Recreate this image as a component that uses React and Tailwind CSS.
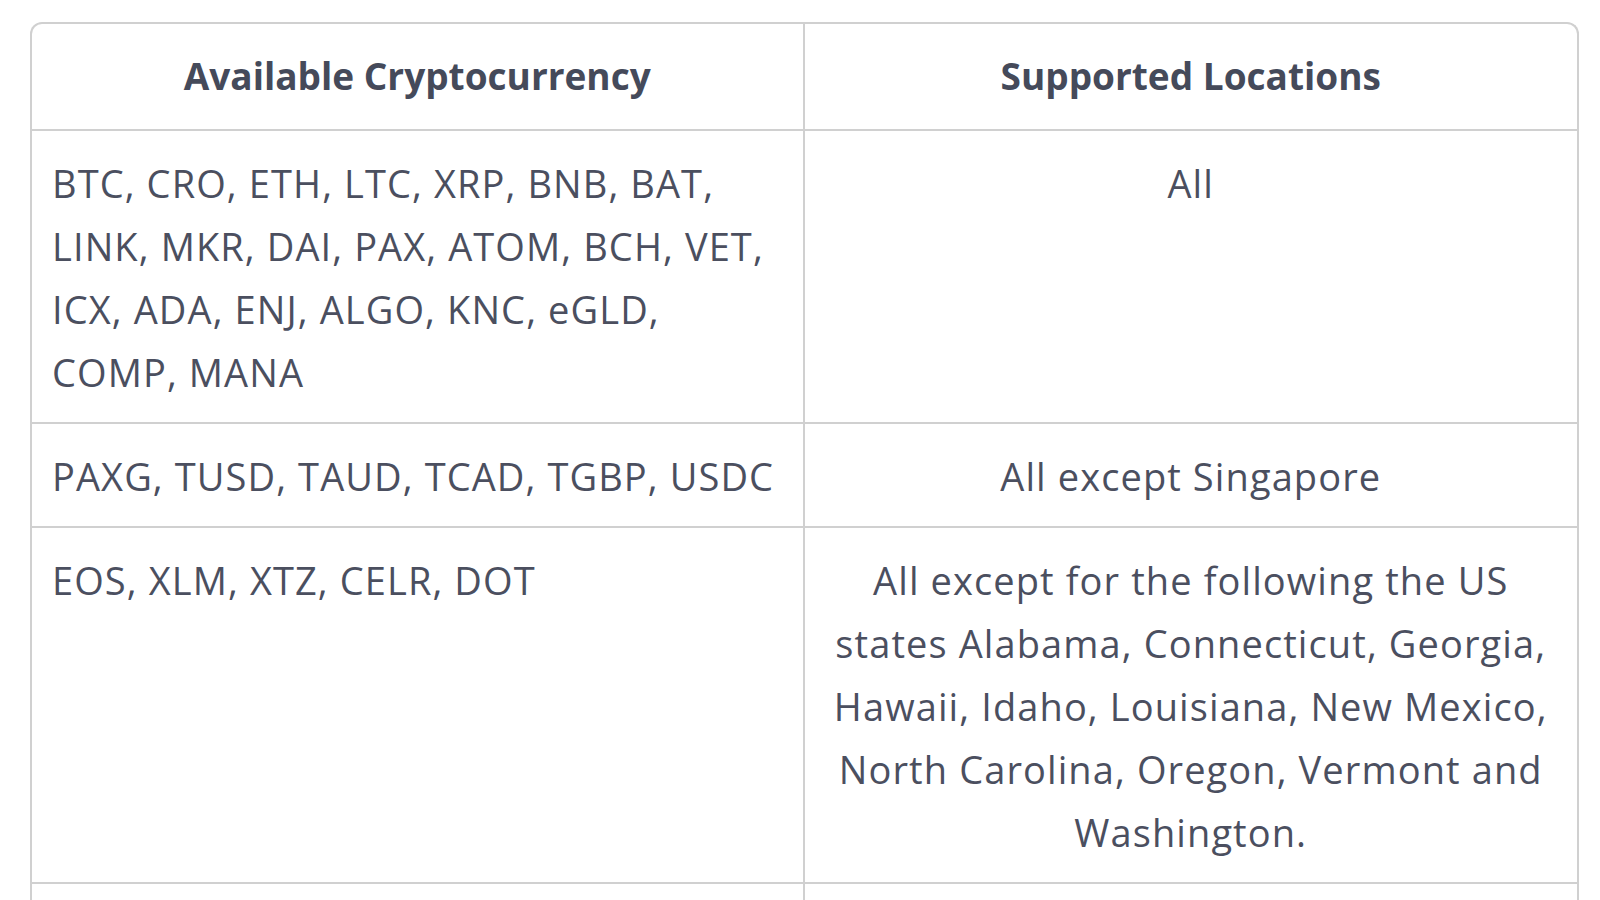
const rows = [
  {
    coins: "BTC, CRO, ETH, LTC, XRP, BNB, BAT, LINK, MKR, DAI, PAX, ATOM, BCH, VET, ICX, ADA, ENJ, ALGO, KNC, eGLD, COMP, MANA",
    where: "All",
  },
  {
    coins: "PAXG, TUSD, TAUD, TCAD, TGBP, USDC",
    where: "All except Singapore",
  },
  {
    coins: "EOS, XLM, XTZ, CELR, DOT",
    where: "All except for the following the US states Alabama, Connecticut, Georgia, Hawaii, Idaho, Louisiana, New Mexico, North Carolina, Oregon, Vermont and Washington.",
  },
];

export default function App() {
  return (
    <div className="bg-white min-h-screen pl-[30px] pt-[22px] font-['Open_Sans',sans-serif]">
      <div className="w-[1549px] border-2 border-b-0 border-[#d0d0d0] rounded-t-[12px] overflow-hidden">
        {/* header */}
        <div className="grid grid-cols-2 border-b-2 border-[#d0d0d0]">
          <div className="border-r-2 border-[#d0d0d0] px-[21px] pt-[20px] pb-[22px] text-center text-[37px] leading-[63px] font-bold text-[#454a5a]">
            Available Cryptocurrency
          </div>
          <div className="px-[21px] pt-[20px] pb-[22px] text-center text-[37px] leading-[63px] font-bold text-[#454a5a]">
            Supported Locations
          </div>
        </div>

        {rows.map((r, i) => (
          <div key={i} className="grid grid-cols-2 border-b-2 border-[#d0d0d0]">
            <div className="border-r-2 border-[#d0d0d0] px-[20px] pt-[21px] pb-[18px] text-[38px] tracking-[1.1px] leading-[63px] text-[#4b4f5f]">
              {r.coins}
            </div>
            <div className="px-[20px] pt-[21px] pb-[18px] text-center text-[38px] tracking-[1.1px] leading-[63px] text-[#4b4f5f]">
              {r.where}
            </div>
          </div>
        ))}

        {/* next row, continues below the fold */}
        <div className="grid grid-cols-2 h-[60px]">
          <div className="border-r-2 border-[#d0d0d0]" />
          <div />
        </div>
      </div>
    </div>
  );
}
